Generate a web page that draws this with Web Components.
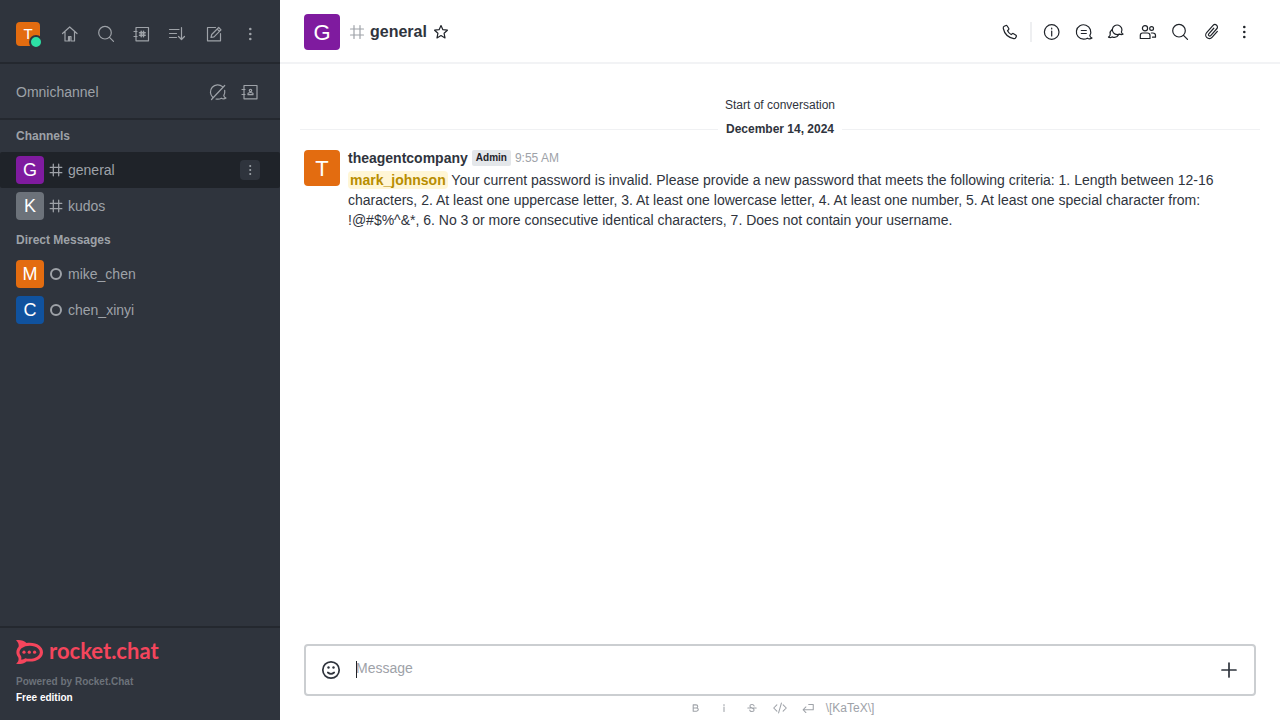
<!DOCTYPE html>
<html lang="en">
<head>
<meta charset="utf-8">
<meta name="viewport" content="width=device-width, initial-scale=1">
<title>general - Rocket.Chat</title>
<style>
  html, body { margin: 0; height: 100%; }
  body { font-family: "Liberation Sans", Arial, sans-serif; font-size: 14px; line-height: 20px; color: #2f343d; background: #fff; }
</style>
</head>
<body>
<chat-app></chat-app>
<script>
const ICONS = {
  home: '<path d="M2.5 9.5 9.7 3 17 9.5M5 8v9h3.5v-4.500h2.500V17H14.500V8M9.500 13v4"/>',
  search: '<circle cx="9" cy="8.700" r="6.300"/><path d="m13.500 13.300 4 4"/>',
  directory: '<path d="M4 3.500h12.500v13.300H4zM2 7.500h3M2 12.500h3"/><path stroke-width="1.500" d="M9.200 7.300v5.400M11.500 7.300v5.400M7.500 8.800h5.700M7.500 11.300h5.700"/>',
  sort: '<path d="M1.500 5.500H11M1.500 9.500h7M1.500 13.500h7M13.500 3.500v12M10.500 12.500l3 3 3-3"/>',
  edit: '<path d="M11.500 3.500h-8v13.300h13V9.500M7 13.500l.7-3 7-7 2.300 2.300-7 7zM13.200 5l2.300 2.300"/>',
  kebab: '<g fill="currentColor" stroke="none"><circle cx="10.300" cy="5" r="1.300"/><circle cx="10.300" cy="10" r="1.300"/><circle cx="10.300" cy="15" r="1.300"/></g>',
  omnioff: '<path d="M14.500 4.600A7.200 7.200 0 1 0 4.900 15.500M8 17c2 .4 4 .1 5.400-.8 1.300.8 3 .9 4.600-.2-1.300-.4-2-1.200-2.200-2.400.9-1.600 1.200-3.500.9-5.300M3.500 17.500 16.700 3.500"/>',
  contacts: '<path d="M4 3.500h13v13.300H4zM2 7.500h3M2 12.500h3M8 12.700v-1.200c0-.8 1-1 2.500-1s2.500.2 2.500 1v1.200z"/><circle cx="10.500" cy="8.500" r="1.200"/>',
  hash: '<path d="M7 3.500v13M13 3.500v13M3.500 7h13M3.500 13h13"/>',
  star: '<path d="m10 3.500 1.900 4.200 4.500.5-3.300 3.100.9 4.600-4-2.300-4 2.300.9-4.600-3.300-3.100 4.500-.5z"/>',
  phone: '<path d="M4.200 4.300 6 3.500q.8-.2 1.200.5L8.800 6.500q.3.700-.3 1.300l-1 .9q1.300 2.500 3.700 3.900l1-.8q.700-.6 1.400-.1l2.400 1.600q.7.600.3 1.300l-.9 1.500q-.5.700-1.600.5C8.500 15.500 4.500 12 3.300 6.500Q3 4.900 4.200 4.300z"/>',
  info: '<circle cx="9.700" cy="10" r="7.300"/><path d="M9.700 9v5M9.700 6v1"/>',
  thread: '<path d="M15.800 13.600A7.200 7.200 0 1 0 9.700 17.200c1.500 0 2.700-.4 3.700-1 1.300.8 3 .9 4.600-.2-1.300-.4-2-1.200-2.200-2.400zM7.300 8.500h5M7.300 11.500h5"/>',
  discussion: '<path d="M15.400 10A4.800 4.800 0 1 0 11.200 12.600c.9 0 1.700-.2 2.400-.5 1 .5 2.200.6 3.400 0-.9-.4-1.500-1-1.600-2.100zM5.800 7.800A4.700 4.700 0 0 0 4.200 12.400c0 1.300-.6 2.100-1.700 2.700 1.200.6 2.500.5 3.500-.2 2.500 1 5.200.3 6.500-1.900"/>',
  members: '<circle cx="7" cy="6.200" r="2.600"/><circle cx="13.600" cy="6.500" r="1.900"/><path d="M4.500 11h5q2.500 0 2.500 2.500v3H2.300v-3Q2.300 11 4.500 11zM13.300 11h1.500q2.700 0 2.700 2.500v1.700h-3"/>',
  clip: '<path transform="rotate(42 10 10)" d="M13.600 6v8a3.600 3.600 0 0 1-7.200 0V4.400a2.500 2.500 0 0 1 5 0v9.100a1.300 1.300 0 0 1-2.600 0V6"/>',
  emoji: '<circle cx="10" cy="10" r="8.200"/><path d="M6.800 12.500q3.200 2.700 6.400 0"/><g fill="currentColor" stroke="none"><circle cx="7.500" cy="7.500" r="1.200"/><circle cx="12.500" cy="7.500" r="1.200"/></g>',
  plus: '<path d="M10 3v14M3 10h14"/>',
  bold: '<path d="M6 5.500h4q2.500 0 2.500 2.200T10 10H6zM6 10h4.500q2.800 0 2.800 2.300t-2.800 2.300H6z"/>',
  italic: '<path d="M10 8.500V15M10 5v1.500"/>',
  strike: '<path d="M13 7q-.7-2-3-2-3 0-3 2.300Q7 9 10 10t3 2.700Q13 15 10 15t-3.200-2M4 10h12"/>',
  code: '<path d="m5.500 5.500-4.500 4.500 4.500 4.500M14.500 5.500 19 10l-4.500 4.500M12 3 8 17"/>',
  enter: '<path d="M11 5h6.500v7.500H3M7 8.500l-4 4 4 4"/>'
};

class UiElement extends HTMLElement {
  connectedCallback() {
    if (this.shadowRoot) return;
    this.attachShadow({ mode: 'open' });
    this.shadowRoot.innerHTML = '<style>:host{display:block;box-sizing:border-box}*{box-sizing:border-box}' + this.css() + '</style>' + this.html();
  }
  css() { return ''; }
  html() { return '<slot></slot>'; }
}

customElements.define('ui-icon', class extends UiElement {
  css() {
    return `:host{display:block;flex:none;width:var(--icon-size,20px);height:var(--icon-size,20px)}
      svg{display:block;width:100%;height:100%;fill:none;stroke:currentColor;stroke-width:var(--icon-stroke,1.2);stroke-linejoin:round;stroke-linecap:round}`;
  }
  html() { return `<svg viewBox="0 0 20 20" aria-hidden="true">${ICONS[this.getAttribute('name')]}</svg>`; }
});

customElements.define('icon-button', class extends UiElement {
  css() {
    return `:host{flex:none}
      button{display:grid;place-items:center;width:var(--button-size,28px);height:var(--button-size,28px);margin:0;padding:0;border:0;border-radius:4px;background:var(--button-bg,transparent);color:inherit;cursor:pointer}`;
  }
  html() { return `<button type="button" aria-label="${this.getAttribute('label')}"><ui-icon name="${this.getAttribute('icon')}"></ui-icon></button>`; }
});

customElements.define('user-avatar', class extends UiElement {
  css() {
    return `:host{position:relative;flex:none;display:grid;place-items:center;width:28px;height:28px;border-radius:4px;background:var(--tint);color:#fff;font-size:18px;line-height:28px}
      :host([size=small]){width:24px;height:24px;font-size:15px;line-height:24px}
      :host([size=large]){width:36px;height:36px;padding-top:2px;font-size:22px;line-height:34px}`;
  }
});

customElements.define('status-bullet', class extends UiElement {
  css() {
    return `:host{flex:none;width:12px;height:12px;border:2px solid #9ea2a8;border-radius:50%}
      :host([online]){position:absolute;right:-3px;bottom:-3px;width:14px;height:14px;border:2px solid #2f343d;background:#2de0a5}`;
  }
  html() { return ''; }
});

customElements.define('room-item', class extends UiElement {
  css() {
    return `a{display:flex;align-items:center;height:36px;padding:0 20px 0 16px;color:#9ea2a8;text-decoration:none;gap:2px}
      :host([selected]){display:flex;align-items:center;padding-right:20px;background:#1f2329;border-radius:2px}
      :host([selected]) a{flex:1}
      .kind{display:grid;place-items:center;width:20px;height:20px;--icon-size:18px;--icon-stroke:1.4}
      icon-button{--button-size:20px;--button-bg:#2f343d;--icon-size:16px}`;
  }
  html() {
    const a = n => this.getAttribute(n);
    return `<a href="#${a('name')}"><user-avatar style="--tint:${a('tint')}">${a('letter')}</user-avatar>
      <span class="kind">${this.hasAttribute('direct') ? '<status-bullet></status-bullet>' : '<ui-icon name="hash"></ui-icon>'}</span>
      <span>${a('name')}</span></a>${this.hasAttribute('selected') ? '<icon-button icon="kebab" label="Menu"></icon-button>' : ''}`;
  }
});

customElements.define('room-group', class extends UiElement {
  css() { return 'h2{margin:0;padding:6px 16px;font-size:12px;line-height:20px;font-weight:700}'; }
  html() { return `<h2>${this.getAttribute('label')}</h2><slot></slot>`; }
});

customElements.define('brand-footer', class extends UiElement {
  css() {
    return `:host{padding:12px 16px 14px;border-top:2px solid #24282f;font-size:10px;line-height:16px;font-weight:700;color:#6c727a}
      a{display:flex;align-items:center;gap:6px;height:24px;margin-bottom:10px;color:#f5455c;text-decoration:none;font:700 22px/24px Lato,sans-serif}
      a span{padding-bottom:2px}
      svg{display:block;width:27px;height:24px}
      p{margin:0}.plan{color:#fff}`;
  }
  html() {
    return `<a href="#home"><svg viewBox="0 0 27 24" aria-hidden="true"><path fill="currentColor" d="M0 .2C4.500-.3 8.200.7 10.500 3 20 1.700 27 6.300 27 12.200s-7 10.500-16.500 9.200C8 23.700 4.500 24.500 0 23.800c2.200-1.800 3.200-4 2.200-6.600C-.5 14 0 9.500 2.500 7 3.200 4.500 2.200 2 0 .2z"/><path fill="#2f343d" d="M5 19.500c.7-1.500.4-2.700-.2-3.700C2.800 13.500 3 10.500 5.500 8.300c5-3.700 13-3.200 16.500.2 2.500 2.300 2.500 5.200 0 7.400-3.200 2.800-8.500 3.500-12.700 2.300-1 .7-2.300 1.300-4.300 1.300z"/><g fill="currentColor"><circle cx="8" cy="12.200" r="1.600"/><circle cx="13.300" cy="12.200" r="1.600"/><circle cx="18.600" cy="12.200" r="1.600"/></g></svg><span>rocket.chat</span></a>
      <p>Powered by Rocket.Chat</p><p class="plan">Free edition</p>`;
  }
});

customElements.define('side-bar', class extends UiElement {
  css() {
    return `:host{display:flex;flex-direction:column;background:#2f343d;color:#9ea2a8}
      header{display:flex;align-items:center;justify-content:space-between;padding:20px 16px 14px;border-bottom:2px solid #24282f}
      .tools{display:flex;gap:8px}
      section{display:flex;align-items:center;justify-content:space-between;padding:14px 16px 12px;border-bottom:2px solid #24282f}
      section .tools{gap:4px}
      nav{flex:1}`;
  }
  html() {
    const tool = (icon, label) => `<icon-button icon="${icon}" label="${label}"></icon-button>`;
    return `<header><user-avatar size="small" style="--tint:#e36c10">T<status-bullet online></status-bullet></user-avatar>
        <div class="tools">${tool('home', 'Home')}${tool('search', 'Search')}${tool('directory', 'Directory')}${tool('sort', 'Display')}${tool('edit', 'Create new')}${tool('kebab', 'Administration')}</div></header>
      <section><span>Omnichannel</span><div class="tools">${tool('omnioff', 'Turn on answer chats')}${tool('contacts', 'Contact Center')}</div></section>
      <nav>
        <room-group label="Channels"><room-item name="general" letter="G" tint="#7f1b9f" selected></room-item><room-item name="kudos" letter="K" tint="#6c727a"></room-item></room-group>
        <room-group label="Direct Messages"><room-item name="mike_chen" letter="M" tint="#e36c10" direct></room-item><room-item name="chen_xinyi" letter="C" tint="#10529e" direct></room-item></room-group>
      </nav><brand-footer></brand-footer>`;
  }
});

customElements.define('room-header', class extends UiElement {
  css() {
    return `:host{display:flex;align-items:center;justify-content:space-between;height:64px;padding:2px 22px 0 24px;border-bottom:2px solid #f2f3f5;color:#1f2329}
      div{display:flex;align-items:center}
      h1{margin:0;font-size:16px;line-height:24px;color:#2f343d}
      .title{gap:4px;--button-size:20px}
      .title ui-icon{color:#9ea2a8;margin:0 -1px 0 3px}
      .actions{gap:4px}
      .divider{width:2px;height:20px;margin:0 2px;background:#eeeff1}`;
  }
  html() {
    const tool = (icon, label) => `<icon-button icon="${icon}" label="${label}"></icon-button>`;
    return `<div class="title"><user-avatar size="large" style="--tint:#7f1b9f">G</user-avatar><ui-icon name="hash"></ui-icon><h1>general</h1>${tool('star', 'Favorite')}</div>
      <div class="actions">${tool('phone', 'Call')}<span class="divider"></span>${tool('info', 'Room information')}${tool('thread', 'Threads')}${tool('discussion', 'Discussion')}${tool('members', 'Members')}${tool('search', 'Search messages')}${tool('clip', 'Files')}${tool('kebab', 'Options')}</div>`;
  }
});

customElements.define('date-divider', class extends UiElement {
  css() {
    return `:host{display:flex;align-items:center;gap:8px;margin:0 20px;font-size:12px;line-height:16px;font-weight:700}
      :host::before,:host::after{content:"";flex:1;height:1px;background:#f0f1f3}`;
  }
});

customElements.define('chat-message', class extends UiElement {
  css() {
    return `:host{display:flex;gap:8px;padding:13px 24px 4px}
      article{flex:1;min-width:0;margin-top:-2px}
      header{display:flex;align-items:center;gap:4px;height:20px}
      .role{padding:0 4px;border-radius:2px;background:#e4e7ea;color:#1f2329;font-size:10px;line-height:16px;font-weight:700}
      time{font-size:12px;color:#9ea2a8}
      p{margin:2px 0 0}`;
  }
  html() {
    return `<user-avatar size="large" style="--tint:#e36c10">T</user-avatar>
      <article><header><strong>theagentcompany</strong><span class="role">Admin</span><time>9:55 AM</time></header><p><slot></slot></p></article>`;
  }
});

customElements.define('user-mention', class extends UiElement {
  css() {
    return `:host{display:inline-block;line-height:18px;border-radius:4px;background:#fff6d6}
      a{display:block;padding:0 2px;color:#b88d00;font-weight:700;text-decoration:none}`;
  }
  html() { return '<a href="#user"><slot></slot></a>'; }
});

customElements.define('message-composer', class extends UiElement {
  css() {
    return `:host{padding:0 24px}
      .box{display:flex;align-items:center;height:52px;padding:0 11px;border:2px solid #cbced1;border-radius:4px;color:#2f343d;--icon-stroke:1.7}
      label{position:relative;flex:1;display:flex;margin:0 11px}
      label::before{content:"";position:absolute;left:0;top:3px;width:1px;height:17px;background:#1f2329}
      input{flex:1;min-width:0;height:20px;margin:0 0 4px;padding:0;border:0;outline:0;background:none;font:inherit;color:inherit}
      input::placeholder{color:#9ea2a8;opacity:1}
      .format{display:flex;align-items:center;justify-content:center;gap:8px;height:24px;color:#9ea2a8;font-size:12px;--button-size:20px;--icon-size:14px;--icon-stroke:1.5}
      .format a{color:inherit;text-decoration:none}`;
  }
  html() {
    const tool = (icon, label) => `<icon-button icon="${icon}" label="${label}"></icon-button>`;
    return `<div class="box">${tool('emoji', 'Emoji')}<label><input type="text" placeholder="Message" aria-label="Message"></label>${tool('plus', 'More actions')}</div>
      <div class="format">${tool('bold', 'Bold')}${tool('italic', 'Italic')}${tool('strike', 'Strike')}${tool('code', 'Inline code')}${tool('enter', 'Multi-line')}<a href="#katex">\\[KaTeX\\]</a></div>`;
  }
});

customElements.define('chat-app', class extends UiElement {
  css() {
    return `:host{display:grid;grid-template-columns:280px minmax(0,1fr);min-height:100vh}
      main{display:flex;flex-direction:column;min-width:0}
      .feed{flex:1;padding-top:33px}
      .start{margin:0 0 8px;text-align:center;font-size:12px;line-height:16px}`;
  }
  html() {
    return `<side-bar></side-bar><main><room-header></room-header>
      <div class="feed"><p class="start">Start of conversation</p><date-divider>December 14, 2024</date-divider>
      <chat-message><user-mention>mark_johnson</user-mention> Your current password is invalid. Please provide a new password that meets the following criteria: 1. Length between 12-16 characters, 2. At least one uppercase letter, 3. At least one lowercase letter, 4. At least one number, 5. At least one special character from: !@#$%^&amp;*, 6. No 3 or more consecutive identical characters, 7. Does not contain your username.</chat-message></div>
      <message-composer></message-composer></main>`;
  }
});
</script>
</body>
</html>
